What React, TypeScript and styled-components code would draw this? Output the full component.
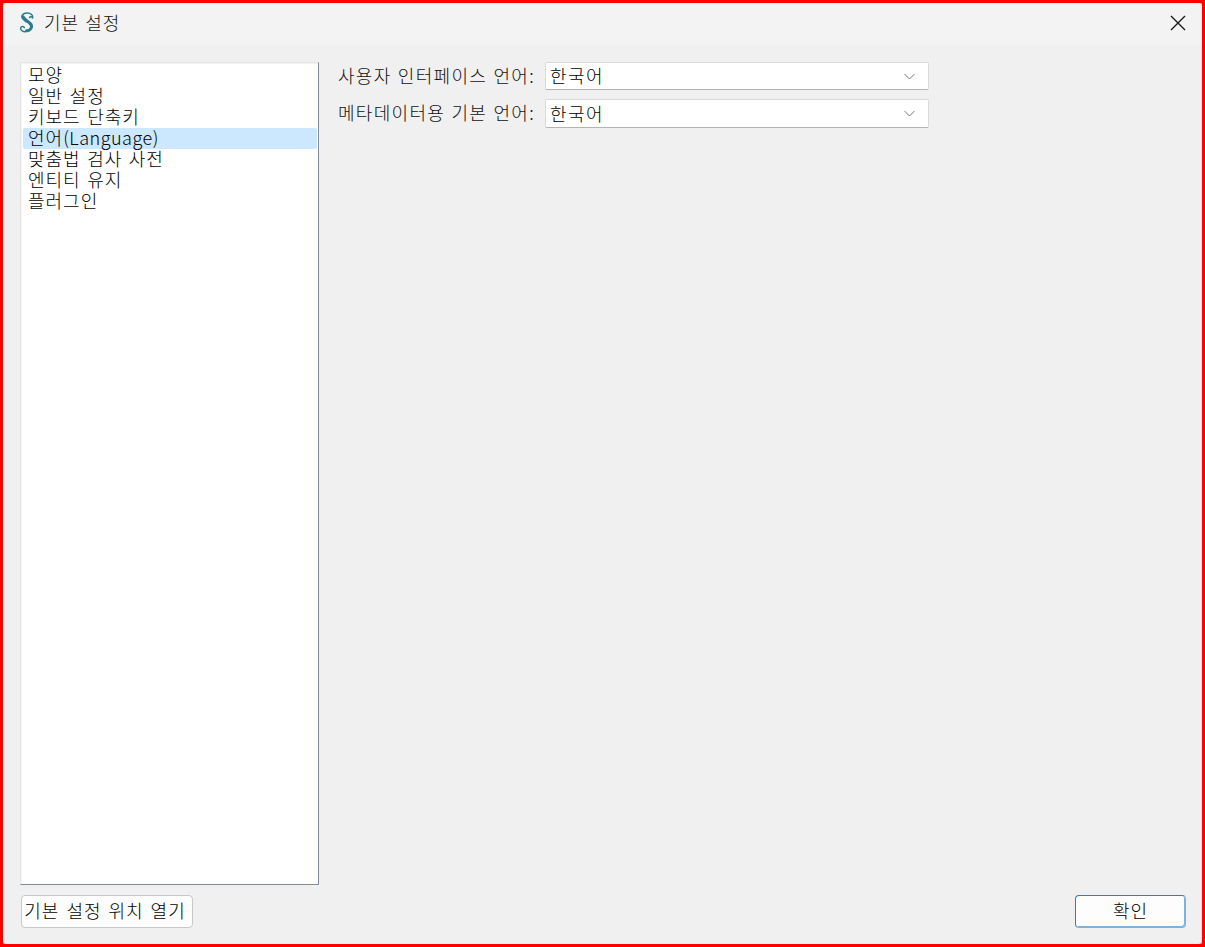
import React from 'react';
import styled, { createGlobalStyle } from 'styled-components';

const GlobalStyle = createGlobalStyle`
  html, body {
    margin: 0;
    padding: 0;
    background: #ff0000;
  }
  body {
    font-family: "Noto Sans CJK KR", "Noto Sans", sans-serif;
    font-weight: 300;
    color: #000;
  }
`;

const Frame = styled.div`
  width: 1205px;
  height: 947px;
  box-sizing: border-box;
  border: 3px solid #ff0000;
  background: #9a9a9a;
`;

const Surface = styled.div`
  height: 100%;
  display: flex;
  flex-direction: column;
  background: #f0f0f0;
  border-radius: 4px;
  overflow: hidden;
`;

const TitleBar = styled.header`
  height: 42px;
  box-sizing: border-box;
  flex: none;
  display: flex;
  align-items: center;
  padding: 0 16px 3px 16px;
  background: #f3f3f3;
`;

const AppLogo = styled.svg`
  width: 16px;
  height: 22px;
  margin-right: 9px;
  flex: none;
`;

const WindowTitle = styled.div`
  flex: 1;
  font-size: 18px;
  line-height: 20px;
  padding-bottom: 2px;
  letter-spacing: 0.9px;
  word-spacing: 1.5px;
  color: #111;
`;

const CloseIcon = styled.svg`
  width: 16px;
  height: 16px;
  display: block;
`;

const Body = styled.div`
  flex: 1;
  min-height: 0;
  display: flex;
  gap: 19px;
  padding: 17px 0 0 17px;
`;

const SidebarList = styled.ul`
  width: 299px;
  box-sizing: border-box;
  margin: 0;
  padding: 2px 1px 0 2px;
  list-style: none;
  background: #fff;
  border-style: solid;
  border-width: 1px;
  border-color: #e4e4e4 #838a99 #838a99 #e4e4e4;
  box-shadow: inset 1px 1px 0 #f4f4f4;
`;

const SidebarItem = styled.li<{ $selected?: boolean }>`
  height: 21px;
  padding: 0 5px;
  font-size: 18px;
  line-height: 19px;
  letter-spacing: 1px;
  word-spacing: 1.5px;
  white-space: nowrap;
  border-radius: 2px;
  background: ${p => (p.$selected ? '#cce8ff' : 'transparent')};
`;

const LatinRun = styled.span`
  letter-spacing: 0.5px;
`;

const Settings = styled.div`
  display: grid;
  grid-template-columns: 207px 384px;
  grid-template-rows: 28px 29px;
  row-gap: 9px;
  align-content: start;
`;

const FieldLabel = styled.label`
  font-size: 18px;
  line-height: 26px;
  letter-spacing: 1.3px;
  word-spacing: 1px;
  white-space: nowrap;
  color: #111;
`;

const Select = styled.div`
  box-sizing: border-box;
  display: flex;
  align-items: center;
  justify-content: space-between;
  padding: 0 13px 2px 4px;
  background: #fff;
  border: 1px solid #d9d9d9;
  border-bottom-color: #b4b4b4;
  border-radius: 2px;
  font-size: 18px;
  letter-spacing: 1.4px;
  line-height: 24px;
`;

const Chevron = styled.svg`
  width: 11px;
  height: 7px;
  display: block;
  margin-top: 2px;
`;

const Footer = styled.footer`
  flex: none;
  box-sizing: border-box;
  height: 59px;
  display: flex;
  justify-content: space-between;
  align-items: flex-start;
  padding: 10px 16px 0 18px;
`;

const Button = styled.button<{ $primary?: boolean }>`
  box-sizing: border-box;
  height: 33px;
  padding: ${p => (p.$primary ? '0 0 3px' : '0 4px 3px 0')};
  background: #fdfdfd;
  border-radius: 4px;
  border-style: solid;
  border-width: 1px;
  border-color: ${p => (p.$primary ? '#2a80c8 #7ab3e0 #7ab3e0 #2a80c8' : '#c8c8c8')};
  box-shadow: ${p => (p.$primary ? 'inset -1px -1px 0 #7ab3e0' : 'none')};
  font-family: inherit;
  font-weight: 300;
  font-size: 18px;
  color: #000;
  width: ${p => (p.$primary ? '111px' : '172px')};
  letter-spacing: ${p => (p.$primary ? '0.9px' : '1px')};
  word-spacing: ${p => (p.$primary ? '0' : '2px')};
  white-space: nowrap;
`;

const SelectArrow: React.FC = () => (
  <Chevron viewBox="0 0 11 7">
    <path d="M0.5 1 L5.5 6 L10.5 1" stroke="#777" strokeWidth="1" fill="none" />
  </Chevron>
);

const App: React.FC = () => {
  const categories = ['모양', '일반 설정', '키보드 단축키', '언어', '맞춤법 검사 사전', '엔티티 유지', '플러그인'];

  return (
    <Frame>
      <GlobalStyle />
      <Surface>
        <TitleBar>
          <AppLogo viewBox="0 0 16 22">
            {/* swash S: thick spine, thin hooks that curl in at both ends */}
            <path
              d="M4 4.8 C5.5 7.6 8.5 9.2 10.6 11 C12.6 12.7 13 15 11.6 17 C10.6 18.4 9 18.9 7.6 18.7"
              fill="none"
              stroke="#2c7d8c"
              strokeWidth="3"
              strokeLinecap="round"
            />
            <path
              d="M13.6 6 C14.4 3.2 11.8 1 8.4 1 C5 1 2.6 2.6 2.8 5 C3 7.4 5.4 8.6 7.2 9.8 M10.6 5.6 C11 4.2 12.8 4.4 13.6 6 M7.8 19.4 C4.6 20.4 1.4 18.8 1.6 16.2 C1.8 14.2 4.6 13.8 5.4 15.6"
              fill="none"
              stroke="#2c7d8c"
              strokeWidth="1.5"
              strokeLinecap="round"
            />
          </AppLogo>
          <WindowTitle>기본 설정</WindowTitle>
          <CloseIcon viewBox="0 0 16 16">
            <path d="M1 1 L15 15 M15 1 L1 15" stroke="#1a1a1a" strokeWidth="1.4" fill="none" />
          </CloseIcon>
        </TitleBar>
        <Body>
          <SidebarList>
            {categories.map((name, i) => (
              <SidebarItem key={name} $selected={i === 3}>
                {name}
                {i === 3 && <LatinRun>(Language)</LatinRun>}
              </SidebarItem>
            ))}
          </SidebarList>
          <Settings>
            <FieldLabel>사용자 인터페이스 언어:</FieldLabel>
            <Select>
              한국어
              <SelectArrow />
            </Select>
            <FieldLabel>메타데이터용 기본 언어:</FieldLabel>
            <Select>
              한국어
              <SelectArrow />
            </Select>
          </Settings>
        </Body>
        <Footer>
          <Button>기본 설정 위치 열기</Button>
          <Button $primary>확인</Button>
        </Footer>
      </Surface>
    </Frame>
  );
};

export default App;
